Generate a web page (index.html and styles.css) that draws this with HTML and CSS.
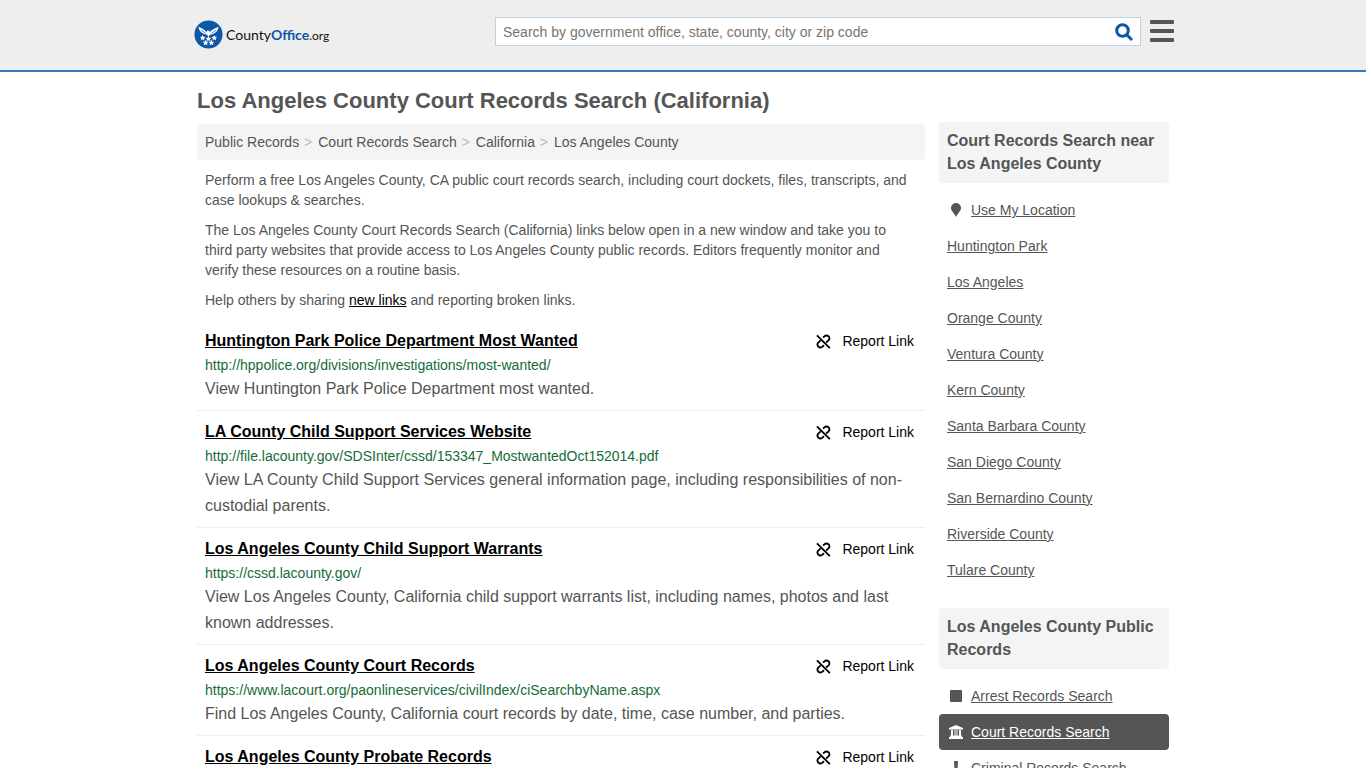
FILE: index.html
```html
<!DOCTYPE html>
<html lang="en">

<head>
    <meta charset="UTF-8">
    <meta name="viewport" content="width=device-width, initial-scale=1.0">
    <title>Los Angeles County Court Records Search (California)</title>
    <link rel="stylesheet" href="styles.css">
</head>

<body>
    <!-- shared icons -->
    <svg class="sprite" aria-hidden="true">
        <symbol id="icon-unlink" viewBox="0 0 16 16">
            <g fill="none" stroke="currentColor" stroke-width="2">
                <path d="M1 1.500L14.800 15" />
                <path d="M7.500 3.800L9 2.500a3 3 0 0 1 4.300-.1a3 3 0 0 1 .1 4.400L10.800 9" />
                <path d="M5 6.800L2.600 8.900a3 3 0 0 0-.1 4.500a3 3 0 0 0 4.400.1L8.500 12" />
            </g>
        </symbol>
    </svg>

    <header class="site-header">
        <div class="header-inner">
            <a href="#" class="logo">
                <svg class="logo-mark" viewBox="0 0 30 30" aria-hidden="true">
                    <circle cx="15" cy="15" r="14.500" fill="#0d57a7" />
                    <g fill="#fff">
                        <path d="M4.500 7c3 1.500 6 2.500 8.500 5.500l.8-1.600 2 .2.600 1.200C19 9.500 22.500 8.500 25.500 7c-.5 3.500-2.300 6-5 7-1.500 1-2.800 1.200-4 1.200L15 17.200 13.500 15.200c-1.200 0-2.500-.2-4-1.200-2.700-1-4.500-3.500-5-7z" />
                        <path id="star" d="M9 15.500l.9 1.900 2.100.2-1.600 1.400.5 2.100L9 20l-1.900 1.100.5-2.100L6 17.600l2.100-.2z" />
                        <use href="#star" x="6" y="1" />
                        <use href="#star" x="12" />
                        <use href="#star" x="3" y="5" />
                        <use href="#star" x="9" y="5" />
                    </g>
                    <path d="M7 10.500l5 3M23 10.500l-5 3" stroke="#0d57a7" stroke-width=".7" />
                </svg>
                <span class="logo-text">County<b>Office</b><small>.org</small></span>
            </a>
            <form class="search" role="search">
                <input type="text" class="search-input" aria-label="Search" placeholder="Search by government office, state, county, city or zip code">
                <button type="button" class="search-button" aria-label="Search">
                    <svg viewBox="0 0 18 18" aria-hidden="true">
                        <circle cx="7.500" cy="7.500" r="5.800" />
                        <path d="M11.800 11.800L17 17" />
                    </svg>
                </button>
            </form>
            <button type="button" class="menu-button" aria-label="Menu">
                <span></span><span></span><span></span>
            </button>
        </div>
    </header>

    <div class="page">
        <main class="content">
            <h1>Los Angeles County Court Records Search (California)</h1>
            <nav class="breadcrumb" aria-label="Breadcrumb">
                <a href="#">Public Records</a>
                <a href="#">Court Records Search</a>
                <a href="#">California</a>
                <a href="#">Los Angeles County</a>
            </nav>
            <div class="intro">
                <p>Perform a free Los Angeles County, CA public court records search, including court dockets, files, transcripts, and case lookups &amp; searches.</p>
                <p>The Los Angeles County Court Records Search (California) links below open in a new window and take you to third party websites that provide access to Los Angeles County public records. Editors frequently monitor and verify these resources on a routine basis.</p>
                <p>Help others by sharing <a href="#">new links</a> and reporting broken links.</p>
            </div>

            <ul class="results">
                <li class="result">
                    <div class="result-head">
                        <a href="#" class="result-title">Huntington Park Police Department Most Wanted</a>
                        <a href="#" class="report"><svg><use href="#icon-unlink" /></svg>Report Link</a>
                    </div>
                    <div class="result-url">http://hppolice.org/divisions/investigations/most-wanted/</div>
                    <p>View Huntington Park Police Department most wanted.</p>
                </li>
                <li class="result">
                    <div class="result-head">
                        <a href="#" class="result-title">LA County Child Support Services Website</a>
                        <a href="#" class="report"><svg><use href="#icon-unlink" /></svg>Report Link</a>
                    </div>
                    <div class="result-url">http://file.lacounty.gov/SDSInter/cssd/153347_MostwantedOct152014.pdf</div>
                    <p>View LA County Child Support Services general information page, including responsibilities of non-custodial parents.</p>
                </li>
                <li class="result">
                    <div class="result-head">
                        <a href="#" class="result-title">Los Angeles County Child Support Warrants</a>
                        <a href="#" class="report"><svg><use href="#icon-unlink" /></svg>Report Link</a>
                    </div>
                    <div class="result-url">https://cssd.lacounty.gov/</div>
                    <p>View Los Angeles County, California child support warrants list, including names, photos and last known addresses.</p>
                </li>
                <li class="result">
                    <div class="result-head">
                        <a href="#" class="result-title">Los Angeles County Court Records</a>
                        <a href="#" class="report"><svg><use href="#icon-unlink" /></svg>Report Link</a>
                    </div>
                    <div class="result-url">https://www.lacourt.org/paonlineservices/civilIndex/ciSearchbyName.aspx</div>
                    <p>Find Los Angeles County, California court records by date, time, case number, and parties.</p>
                </li>
                <li class="result">
                    <div class="result-head">
                        <a href="#" class="result-title">Los Angeles County Probate Records</a>
                        <a href="#" class="report"><svg><use href="#icon-unlink" /></svg>Report Link</a>
                    </div>
                </li>
            </ul>
        </main>

        <aside class="sidebar">
            <h2>Court Records Search near Los Angeles County</h2>
            <ul class="side-links">
                <li><a href="#"><svg viewBox="0 0 18 16"><path d="M9 1a5 5 0 0 0-5 5c0 3 3.500 5.500 5 9 1.500-3.500 5-6 5-9a5 5 0 0 0-5-5z" /></svg><span>Use My Location</span></a></li>
                <li><a href="#"><span>Huntington Park</span></a></li>
                <li><a href="#"><span>Los Angeles</span></a></li>
                <li><a href="#"><span>Orange County</span></a></li>
                <li><a href="#"><span>Ventura County</span></a></li>
                <li><a href="#"><span>Kern County</span></a></li>
                <li><a href="#"><span>Santa Barbara County</span></a></li>
                <li><a href="#"><span>San Diego County</span></a></li>
                <li><a href="#"><span>San Bernardino County</span></a></li>
                <li><a href="#"><span>Riverside County</span></a></li>
                <li><a href="#"><span>Tulare County</span></a></li>
            </ul>

            <h2>Los Angeles County Public Records</h2>
            <ul class="side-links">
                <li><a href="#"><svg viewBox="0 0 18 16"><rect x="3" y="2" width="12" height="12" rx="1" /></svg><span>Arrest Records Search</span></a></li>
                <li><a href="#" class="active"><svg viewBox="0 0 18 16"><path d="M9 1l7 3v1.500H2V4zM4 6h2v5.500h1.500V6h1v5.500h1V6h1v5.500H12V6h2v5.500h1V13H3v-1.500h1zM2 13h14v2H2z" /></svg><span>Court Records Search</span></a></li>
                <li><a href="#"><svg viewBox="0 0 18 16"><path d="M7 1h4l-.5 9h-3zM7 12h4v3H7z" /></svg><span>Criminal Records Search</span></a></li>
            </ul>
        </aside>
    </div>
</body>

</html>
```
FILE: styles.css
```css
* {
    margin: 0;
    padding: 0;
    box-sizing: border-box;
}

body {
    font-family: "Liberation Sans", Arial, sans-serif;
    font-size: 14px;
    line-height: 20px;
    color: #555;
    background: #fff;
}

a {
    color: inherit;
}

ul {
    list-style: none;
}

button {
    border: 0;
    background: none;
    cursor: pointer;
}

.sprite {
    display: none;
}

/* Header */
.site-header {
    background: #eee;
    border-bottom: 2px solid #337ab7;
}

.header-inner {
    display: flex;
    align-items: flex-start;
    max-width: 982px;
    height: 70px;
    margin: 0 auto;
    padding: 17px 0 0 2px;
}

.logo {
    display: flex;
    align-items: center;
    gap: 3px;
    padding-top: 3px;
    color: #111;
    text-decoration: none;
}

.logo-mark {
    width: 29px;
    height: 29px;
}

.logo-text {
    padding-top: 2px;
    font-family: Lato, sans-serif;
    font-size: 14px;
}

.logo-text b {
    color: #0d57a7;
}

.logo-text small {
    font-size: 12px;
}

.search {
    display: flex;
    flex: 0 1 646px;
    height: 29px;
    margin-left: auto;
    background: #fff;
    border: 1px solid #bcd4e8;
}

.search-input {
    flex: 1;
    min-width: 0;
    padding: 0 7px;
    border: 0;
    outline: 0;
    font: inherit;
    color: #555;
    background: none;
}

.search-input::placeholder {
    color: #757575;
}

.search-button {
    display: flex;
    align-items: center;
    padding: 0 7px;
}

.search-button svg {
    width: 18px;
    height: 18px;
    fill: none;
    stroke: #0d57a7;
    stroke-width: 3;
}

.menu-button {
    display: flex;
    flex-direction: column;
    gap: 5px;
    width: 24px;
    margin: 3px 0 0 9px;
}

.menu-button span {
    width: 24px;
    height: 4px;
    background: #555;
    border-radius: 1px;
}

/* Page columns */
.page {
    display: flex;
    gap: 14px;
    max-width: 972px;
    margin: 0 auto;
}

.content {
    flex: 1;
    min-width: 0;
    padding-top: 16px;
}

h1 {
    margin-bottom: 10px;
    font-size: 22px;
    line-height: 26px;
}

.breadcrumb {
    padding: 8px;
    background: #f4f4f4;
    border-radius: 4px;
}

.breadcrumb a {
    text-decoration: none;
}

.breadcrumb a + a::before {
    content: ">";
    margin: 0 6px 0 1px;
    color: #bbb;
}

.intro {
    padding: 10px 8px 0;
}

.intro p {
    margin-bottom: 10px;
}

.intro a {
    color: #000;
}

/* Results list */
.result {
    padding: 8px;
    border-bottom: 1px solid #eee;
}

.result-head {
    display: flex;
    justify-content: space-between;
    line-height: 26px;
    color: #000;
}

.result-title {
    font-size: 16px;
    font-weight: bold;
}

.report {
    display: flex;
    align-items: center;
    gap: 11px;
    padding-right: 3px;
    text-decoration: none;
}

.report svg {
    width: 15px;
    height: 15px;
}

.result-url {
    line-height: 22px;
    color: #146c38;
}

.result p {
    font-size: 16px;
    line-height: 26px;
}

/* Sidebar */
.sidebar {
    flex: 0 0 230px;
    padding-top: 50px;
}

.sidebar h2 {
    padding: 7px 8px 8px;
    font-size: 16px;
    line-height: 23px;
    background: #f4f4f4;
    border-radius: 4px;
}

.side-links {
    padding: 9px 0 20px;
}

.side-links a {
    display: flex;
    align-items: center;
    gap: 6px;
    padding: 8px;
    border-radius: 4px;
    text-decoration: none;
}

.side-links span {
    text-decoration: underline;
}

.side-links svg {
    width: 18px;
    height: 16px;
    fill: currentColor;
}

.side-links .active {
    color: #fff;
    background: #555;
}
```
